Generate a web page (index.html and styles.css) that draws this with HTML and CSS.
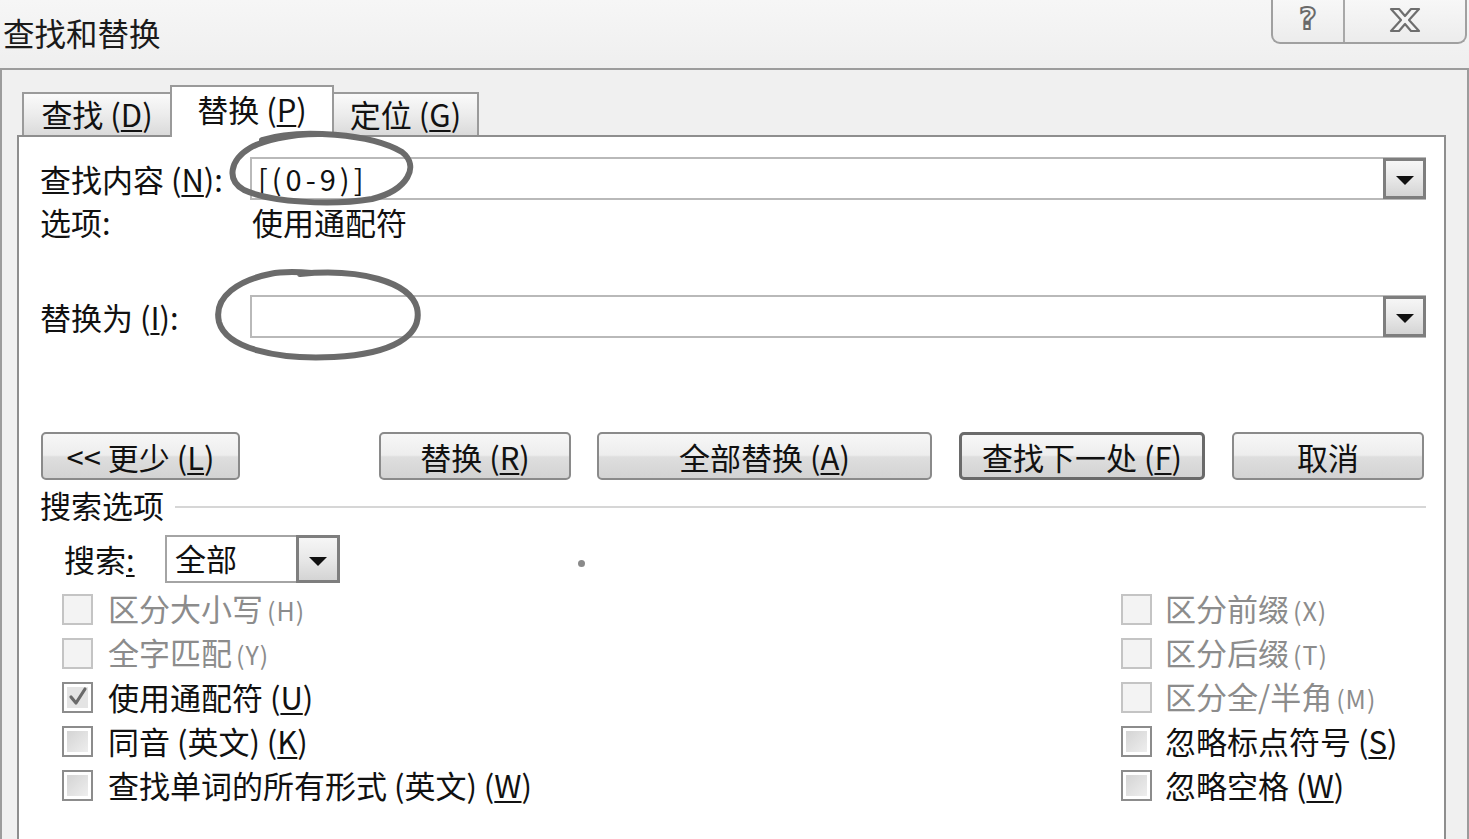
FILE: index.html
```html
<!DOCTYPE html>
<html lang="zh-CN">
<head>
<meta charset="utf-8">
<title>查找和替换</title>
<link rel="stylesheet" href="styles.css">
</head>
<body>
<div class="window">
  <div class="titlebar">
    <div class="title">查找和替换</div>
    <div class="caption">
      <div class="cap-btn cap-help"><span class="qmark">?</span></div>
      <div class="cap-btn cap-close">
        <svg width="34" height="26" viewBox="0 0 34 26"><path d="M3 2 H11 L17 9 L23 2 H31 L21 13 L31 24 H23 L17 17 L11 24 H3 L13 13 Z" fill="#f4f4f4" stroke="#6e6e6e" stroke-width="2.2" stroke-linejoin="round"/></svg>
      </div>
    </div>
  </div>
  <div class="frame">
    <div class="tabs">
      <div class="tab tab-find">查找 (<u>D</u>)</div>
      <div class="tab tab-active">替换 (<u>P</u>)</div>
      <div class="tab tab-goto">定位 (<u>G</u>)</div>
    </div>
    <div class="panel">
      <div class="row row-find">
        <div class="label">查找内容 (<u>N</u>):</div>
        <div class="combo">
          <div class="combo-text">[(0-9)]</div>
          <div class="drop"><span class="tri"></span></div>
        </div>
      </div>
      <div class="row row-opts">
        <div class="label">选项:</div>
        <div class="opt-value">使用通配符</div>
      </div>
      <div class="row row-replace">
        <div class="label">替换为 (<u>I</u>):</div>
        <div class="combo">
          <div class="combo-text"></div>
          <div class="drop"><span class="tri"></span></div>
        </div>
      </div>
      <div class="buttons">
        <div class="btn btn-less">&lt;&lt; 更少 (<u>L</u>)</div>
        <div class="btn btn-rep">替换 (<u>R</u>)</div>
        <div class="btn btn-all">全部替换 (<u>A</u>)</div>
        <div class="btn btn-next">查找下一处 (<u>F</u>)</div>
        <div class="btn btn-cancel">取消</div>
      </div>
      <div class="section">
        <div class="section-title">搜索选项</div>
        <div class="section-line"></div>
      </div>
      <div class="search-row">
        <div class="search-label">搜索<u>:</u></div>
        <div class="select">
          <div class="select-text">全部</div>
          <div class="drop drop-small"><span class="tri"></span></div>
        </div>
        <div class="dot"></div>
      </div>
      <div class="checks">
        <div class="col col-left">
          <div class="check disabled"><span class="box"></span><span class="ct">区分大小写<small>(H)</small></span></div>
          <div class="check disabled"><span class="box"></span><span class="ct">全字匹配<small>(Y)</small></span></div>
          <div class="check"><span class="box checked"><svg width="22" height="22" viewBox="0 0 22 22"><path d="M4 11 L9 17 L18 3" fill="none" stroke="#6a6a6a" stroke-width="3.2" stroke-linecap="round" stroke-linejoin="round"/></svg></span><span class="ct">使用通配符 (<u>U</u>)</span></div>
          <div class="check"><span class="box"></span><span class="ct">同音 (英文) (<u>K</u>)</span></div>
          <div class="check"><span class="box"></span><span class="ct">查找单词的所有形式 (英文) (<u>W</u>)</span></div>
        </div>
        <div class="col col-right">
          <div class="check disabled"><span class="box"></span><span class="ct">区分前缀<small>(X)</small></span></div>
          <div class="check disabled"><span class="box"></span><span class="ct">区分后缀<small>(T)</small></span></div>
          <div class="check disabled"><span class="box"></span><span class="ct">区分全/半角<small>(M)</small></span></div>
          <div class="check"><span class="box"></span><span class="ct">忽略标点符号 (<u>S</u>)</span></div>
          <div class="check"><span class="box"></span><span class="ct">忽略空格 (<u>W</u>)</span></div>
        </div>
      </div>
    </div>
  </div>
  <svg class="marks" width="1469" height="839" viewBox="0 0 1469 839">
    <path d="M262 140 C300 128 372 134 402 152 C420 166 408 190 372 199 C330 206 270 202 244 190 C226 180 230 160 250 148 C262 141 290 134 318 134" fill="none" stroke="#6b6b6b" stroke-width="6" stroke-linecap="round"/>
    <path d="M300 274 C360 268 410 282 417 308 C423 336 392 354 334 357 C276 360 226 348 219 322 C213 296 240 280 270 274 C284 271 300 272 312 273" fill="none" stroke="#6b6b6b" stroke-width="6" stroke-linecap="round"/>
  </svg>
</div>
</body>
</html>
```
FILE: styles.css
```css
* { box-sizing: border-box; }
html, body {
  margin: 0;
  padding: 0;
}
body {
  width: 1469px;
  height: 839px;
  overflow: hidden;
  background: #f3f3f3;
  font-family: "Noto Sans CJK SC", "Liberation Sans", sans-serif;
  color: #111;
}
u { text-decoration: underline; text-underline-offset: 3px; text-decoration-thickness: 2px; }

.window {
  position: relative;
  width: 1469px;
  height: 839px;
  display: flex;
  flex-direction: column;
}

.titlebar {
  height: 68px;
  display: flex;
  align-items: flex-start;
  background: linear-gradient(180deg, #f6f6f6, #efefef);
}
.title {
  font-size: 31.5px;
  line-height: 30px;
  padding: 17px 0 0 3px;
  color: #1a1a1a;
}
.caption {
  margin-left: auto;
  margin-right: 2px;
  margin-top: -2px;
  height: 46px;
  display: flex;
  border: 2px solid #a0a0a0;
  border-top: none;
  border-radius: 0 0 9px 9px;
  background: linear-gradient(180deg, #f8f8f8, #ececec);
}
.cap-btn {
  display: flex;
  align-items: center;
  justify-content: center;
  height: 100%;
}
.cap-help {
  width: 72px;
  border-right: 2px solid #a8a8a8;
}
.cap-close { width: 120px; }
.qmark {
  font-family: "DejaVu Sans", sans-serif;
  font-weight: bold;
  font-size: 30px;
  line-height: 30px;
  color: #f4f4f4;
  -webkit-text-stroke: 2px #6a6a6a;
  margin-top: -2px;
}

.frame {
  flex: 1;
  display: flex;
  flex-direction: column;
  border: 2px solid #9c9c9c;
  border-bottom: none;
  background: #f0f0f0;
  padding: 0 21px 0 15px;
}

.tabs {
  height: 65px;
  display: flex;
  align-items: flex-end;
  padding-left: 5px;
  position: relative;
  z-index: 2;
}
.tab {
  height: 43px;
  display: flex;
  align-items: center;
  justify-content: center;
  font-size: 31px;
  border: 2px solid #9a9a9a;
  border-bottom: none;
  background: linear-gradient(180deg, #fafafa 0%, #ececec 50%, #dadada 100%);
  color: #111;
  padding-bottom: 3px;
  white-space: nowrap;
}
.tab-find { width: 148px; border-right: none; }
.tab-goto { width: 145px; border-left: none; }
.tab-active {
  width: 164px;
  height: 52px;
  margin-bottom: -2px;
  background: #fff;
  padding-bottom: 8px;
}

.panel {
  flex: 1;
  background: #fff;
  border: 2px solid #8e8e8e;
  border-bottom: none;
  padding: 20px 18px 0 21px;
}

.row {
  display: flex;
  align-items: center;
}
.label {
  width: 210px;
  font-size: 31px;
  line-height: 36px;
  white-space: nowrap;
}
.row-find { height: 43px; }
.row-opts { height: 32px; margin-top: 6px; }
.row-replace { height: 43px; margin-top: 57px; }
.opt-value { font-size: 31px; line-height: 36px; padding-left: 2px; }

.combo {
  flex: 1;
  height: 43px;
  display: flex;
  align-items: stretch;
  border: 2px solid #b9b9b9;
  background: #fff;
}
.combo-text {
  flex: 1;
  font-size: 29px;
  line-height: 38px;
  padding-left: 6px;
  letter-spacing: 4px;
}
.drop {
  width: 43px;
  margin: -1px -2px -1px 0;
  border: 3px solid #7e7e7e;
  background: linear-gradient(180deg, #f6f6f6 0%, #e8e8e8 50%, #d4d4d4 100%);
  display: flex;
  align-items: center;
  justify-content: center;
}
.tri {
  width: 0;
  height: 0;
  border-left: 9px solid transparent;
  border-right: 9px solid transparent;
  border-top: 9px solid #111;
  margin-top: 4px;
}

.buttons {
  display: flex;
  margin-top: 94px;
  height: 48px;
  padding-left: 1px;
}
.btn {
  height: 48px;
  display: flex;
  align-items: center;
  justify-content: center;
  font-size: 31px;
  border: 2px solid #8a8a8a;
  border-radius: 5px;
  background: linear-gradient(180deg, #f7f7f7 0%, #ededed 48%, #dedede 52%, #d3d3d3 100%);
  color: #111;
  white-space: nowrap;
}
.btn-less { width: 199px; }
.btn-rep { width: 192px; margin-left: 139px; }
.btn-all { width: 335px; margin-left: 26px; }
.btn-next { width: 246px; margin-left: 27px; border: 3px solid #6a6a6a; }
.btn-cancel { width: 192px; margin-left: 27px; }

.section {
  display: flex;
  align-items: center;
  height: 34px;
  margin-top: 8px;
}
.section-title { font-size: 31px; line-height: 34px; }
.section-line {
  flex: 1;
  height: 2px;
  background: #d6d6d6;
  margin-left: 11px;
  margin-top: 4px;
}

.search-row {
  display: flex;
  align-items: center;
  height: 48px;
  margin-top: 13px;
  padding-left: 24px;
}
.search-label {
  width: 101px;
  font-size: 31px;
  line-height: 36px;
}
.select {
  width: 175px;
  height: 48px;
  display: flex;
  border: 2px solid #a4a4a4;
}
.select-text {
  flex: 1;
  font-size: 31px;
  line-height: 42px;
  padding-left: 8px;
}
.drop-small { width: 44px; margin: -2px -2px -2px 0; }
.dot {
  width: 7px;
  height: 7px;
  border-radius: 50%;
  background: #8a8a8a;
  margin-left: 238px;
  margin-top: 8px;
}

.checks {
  display: flex;
  margin-top: 4px;
  padding-left: 22px;
}
.col-left { width: 1059px; }
.col-right { flex: 1; }
.check {
  height: 44px;
  display: flex;
  align-items: center;
}
.box {
  width: 31px;
  height: 31px;
  border: 2px solid #8c8c8c;
  background: linear-gradient(135deg, #d0d0d0, #f2f2f2);
  box-shadow: inset 0 0 0 3px #fff;
  display: flex;
  align-items: center;
  justify-content: center;
  margin-right: 15px;
}
.col-right .box { margin-right: 13px; }
.ct { font-size: 31px; line-height: 36px; white-space: nowrap; }
.ct small { font-size: 25px; margin-left: 4px; letter-spacing: 1px; }
.check.disabled .box {
  border-color: #c4c4c4;
  background: #f3f3f3;
  box-shadow: none;
}
.check.disabled .ct { color: #8c8c8c; }
.box.checked { background: #e4e4e4; }

.marks {
  position: absolute;
  left: 0;
  top: 0;
  pointer-events: none;
  z-index: 5;
}
```
